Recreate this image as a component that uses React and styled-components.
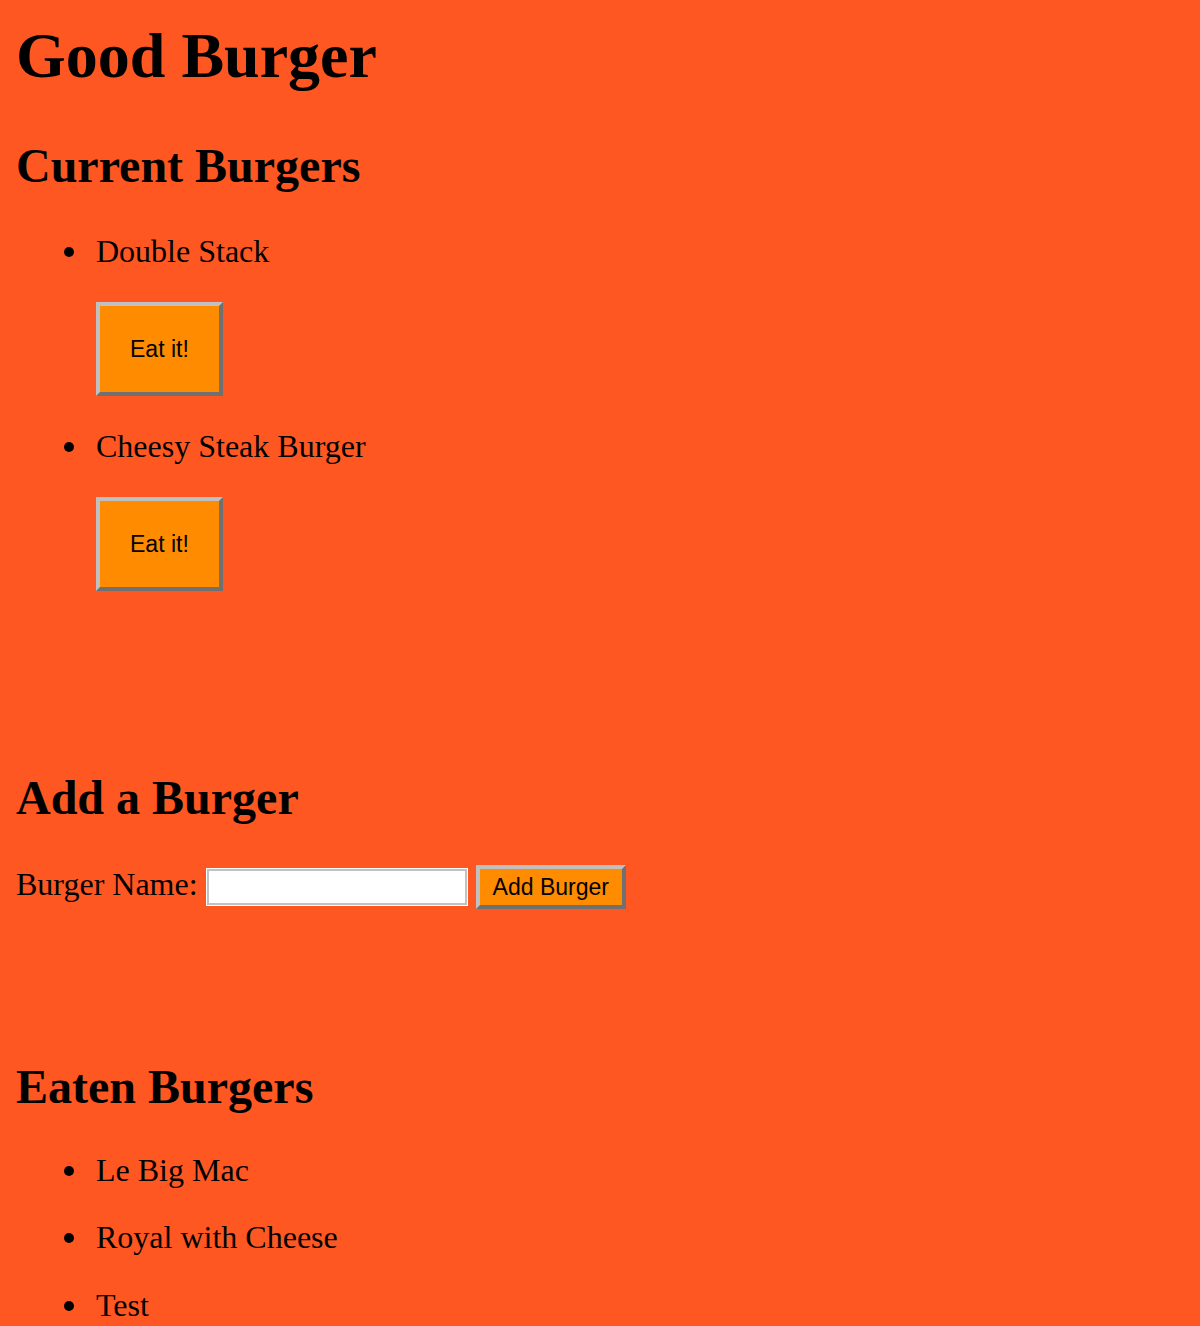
import styled, { createGlobalStyle } from "styled-components";

const GlobalStyle = createGlobalStyle`
    html, body {
        margin: 0;
        padding: 0;
        background: #ff5722;
    }
    body {
        font-family: "Liberation Serif", "Times New Roman", serif;
        color: #000;
    }
`;

const Page = styled.div`
    padding: 0 16px;
    overflow: hidden;
`;

const Title = styled.h1`
    font-size: 64px;
    line-height: 74px;
    font-weight: bold;
    margin: 19px 0 0;
`;

const SectionTitle = styled.h2`
    font-size: 48px;
    line-height: 55px;
    font-weight: bold;
    margin: ${p => p.$top}px 0 0;
`;

const BurgerList = styled.ul`
    list-style: none;
    margin: ${p => p.$top}px 0 0;
    padding: 0 0 0 80px;
`;

const BurgerItem = styled.li`
    position: relative;
    font-size: 32px;
    line-height: 36px;
    &::before {
        content: "";
        position: absolute;
        left: -32px;
        top: 14px;
        width: 10px;
        height: 10px;
        border-radius: 50%;
        background: #000;
    }
    & + & {
        margin-top: ${p => p.$gap}px;
    }
`;

const BurgerName = styled.div`
    margin-bottom: 33px;
`;

const OrangeButton = styled.button`
    font-family: "Liberation Sans", Arial, sans-serif;
    font-size: 23px;
    line-height: 26px;
    color: #000;
    background: #ff8c00;
    border: 4px solid;
    border-color: #c0c0c0 #707070 #707070 #c0c0c0;
    border-radius: 0;
    margin: 0;
    cursor: pointer;
`;

const EatButton = styled(OrangeButton)`
    display: block;
    padding: 30px 30px;
`;

const AddButton = styled(OrangeButton)`
    padding: 5px 13px;
`;

const AddForm = styled.form`
    display: flex;
    align-items: baseline;
    gap: 8px;
    margin-top: 40px;
`;

const Label = styled.label`
    font-size: 32px;
    line-height: 36px;
`;

const NameInput = styled.input`
    box-sizing: border-box;
    width: 262px;
    height: 38px;
    margin: 0;
    padding: 0 6px;
    font-family: "Liberation Sans", Arial, sans-serif;
    font-size: 23px;
    background: #fff;
    border: 1px solid #fff;
    box-shadow: inset 0 0 0 2px #c2c2c2;
    outline: none;
`;

const current = ["Double Stack", "Cheesy Steak Burger"];
const eaten = ["Le Big Mac", "Royal with Cheese", "Test"];

export default function App() {
    return (
        <Page>
            <GlobalStyle />
            <Title>Good Burger</Title>

            <SectionTitle $top={45}>Current Burgers</SectionTitle>
            <BurgerList $top={40}>
                {current.map(name => (
                    <BurgerItem key={name} $gap={31}>
                        <BurgerName>{name}</BurgerName>
                        <EatButton type="button">Eat it!</EatButton>
                    </BurgerItem>
                ))}
            </BurgerList>

            <SectionTitle $top={179}>Add a Burger</SectionTitle>
            <AddForm onSubmit={e => e.preventDefault()}>
                <Label htmlFor="burger">Burger Name:</Label>
                <NameInput id="burger" type="text" />
                <AddButton type="submit">Add Burger</AddButton>
            </AddForm>

            <SectionTitle $top={150}>Eaten Burgers</SectionTitle>
            <BurgerList $top={38}>
                {eaten.map(name => (
                    <BurgerItem key={name} $gap={31.5}>{name}</BurgerItem>
                ))}
            </BurgerList>
        </Page>
    );
}
